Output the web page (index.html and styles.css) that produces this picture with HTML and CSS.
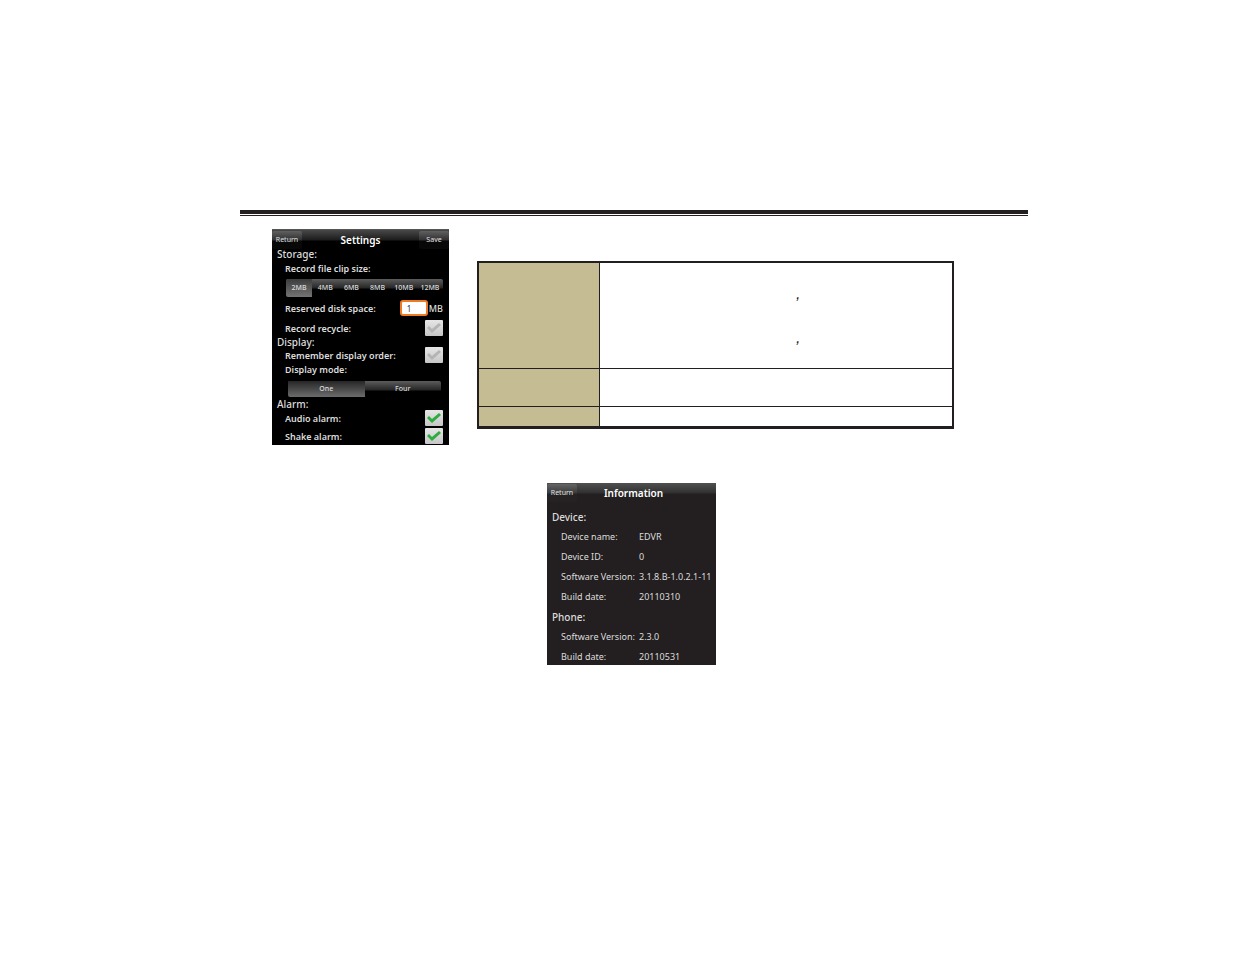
FILE: index.html
```
<!DOCTYPE html>
<html lang="en">
<head>
    <meta charset="UTF-8">
    <title>Settings and Information</title>
    <link rel="stylesheet" href="styles.css">
</head>
<body>

<main class="page">
    <hr class="page-rule">

    <div class="settings-row">
        <form class="phone settings">
            <header class="phone-bar">
                <button type="button" class="bar-btn">Return</button>
                <h1>Settings</h1>
                <button type="button" class="bar-btn">Save</button>
            </header>

            <h2>Storage:</h2>
            <div class="line" id="clipLabel">Record file clip size:</div>
            <div class="segments" role="radiogroup" aria-labelledby="clipLabel">
                <label><input type="radio" name="clip" checked>2MB</label>
                <label><input type="radio" name="clip">4MB</label>
                <label><input type="radio" name="clip">6MB</label>
                <label><input type="radio" name="clip">8MB</label>
                <label><input type="radio" name="clip">10MB</label>
                <label><input type="radio" name="clip">12MB</label>
            </div>
            <div class="line tall">
                <label for="space">Reserved disk space:</label>
                <span class="amount"><input type="text" id="space" value="1">MB</span>
            </div>
            <div class="line tall">
                <label for="recycle">Record recycle:</label>
                <input type="checkbox" id="recycle">
            </div>

            <h2>Display:</h2>
            <div class="line compact">
                <label for="order">Remember display order:</label>
                <input type="checkbox" id="order">
            </div>
            <div class="line short" id="modeLabel">Display mode:</div>
            <div class="segments mode" role="radiogroup" aria-labelledby="modeLabel">
                <label><input type="radio" name="mode" checked>One</label>
                <label><input type="radio" name="mode">Four</label>
            </div>

            <h2>Alarm:</h2>
            <div class="line">
                <label for="audio">Audio alarm:</label>
                <input type="checkbox" id="audio" checked>
            </div>
            <div class="line">
                <label for="shake">Shake alarm:</label>
                <input type="checkbox" id="shake" checked>
            </div>
        </form>

        <table class="notes">
            <tbody>
                <tr class="row-large">
                    <th scope="row"></th>
                    <td><p>,</p><p>,</p></td>
                </tr>
                <tr class="row-medium">
                    <th scope="row"></th>
                    <td></td>
                </tr>
                <tr class="row-small">
                    <th scope="row"></th>
                    <td></td>
                </tr>
            </tbody>
        </table>
    </div>

    <section class="phone info">
        <header class="phone-bar">
            <button type="button" class="bar-btn">Return</button>
            <h1>Information</h1>
        </header>
        <div class="info-body">
            <h2>Device:</h2>
            <dl>
                <dt>Device name:</dt><dd>EDVR</dd>
                <dt>Device ID:</dt><dd>0</dd>
                <dt>Software Version:</dt><dd>3.1.8.B-1.0.2.1-11</dd>
                <dt>Build date:</dt><dd>20110310</dd>
            </dl>
            <h2>Phone:</h2>
            <dl>
                <dt>Software Version:</dt><dd>2.3.0</dd>
                <dt>Build date:</dt><dd>20110531</dd>
            </dl>
        </div>
    </section>
</main>

</body>
</html>
```
FILE: styles.css
```
* {
    box-sizing: border-box;
}

body {
    margin: 0;
    background: #fff;
    color: #231f20;
    font-family: "Noto Sans", "Open Sans", sans-serif;
}

.page {
    padding: 210px 207px 40px 240px;
}

.page-rule {
    height: 6px;
    margin: 0;
    border: 0;
    border-top: 4px solid #231f20;
    border-bottom: 1px solid #231f20;
}

.settings-row {
    display: flex;
    align-items: flex-start;
    gap: 28px;
    padding: 13px 74px 0 32px;
}

/* phone screens */
.phone {
    overflow: hidden;
    background: #000;
    color: #dcdcdc;
    font-size: 9px;
}

.settings {
    flex: 0 0 177px;
}

.phone-bar {
    display: grid;
    grid-template-columns: 30px 1fr 30px;
    align-items: start;
    height: 21px;
    border-top: 1px solid #555;
    background: linear-gradient(#484848, #1c1c1c 10px, #000 11px);
}

.phone h1 {
    margin: 0;
    color: #fff;
    font-size: 10px;
    font-weight: 600;
    line-height: 20px;
    text-align: center;
}

.phone h2 {
    margin: 0;
    padding-left: 5px;
    font-size: 10px;
    font-weight: 500;
    line-height: 9px;
}

.bar-btn {
    height: 18px;
    margin: 1px 0 0;
    padding: 0;
    border: 0;
    border-radius: 2px;
    background: linear-gradient(#606060, #303030 9px, #080808 10px);
    color: #e0e0e0;
    font-family: inherit;
    font-size: 7px;
    line-height: 18px;
}

.line {
    display: flex;
    align-items: center;
    justify-content: space-between;
    height: 18px;
    padding: 0 6px 0 13px;
    font-weight: 600;
}

.tall {
    height: 20px;
}

.compact {
    height: 16px;
}

.short {
    height: 12px;
}

.segments {
    display: flex;
    height: 18px;
    margin: 2px 6px 1px 14px;
    border-radius: 2px;
    overflow: hidden;
    background: linear-gradient(#5c5c5c, #262626 9px, #000 10px);
    font-size: 7px;
    font-weight: 500;
}

.segments label {
    flex: 1;
    line-height: 18px;
    text-align: center;
}

.segments label:has(:checked) {
    background: linear-gradient(#3c3c3c, #747474);
}

.segments input {
    position: absolute;
    opacity: 0;
    margin: 0;
    width: 1px;
    height: 1px;
}

.mode {
    height: 16px;
    margin: 6px 8px 3px 16px;
}

.mode label {
    line-height: 16px;
}

.mode label:has(:checked) {
    background: linear-gradient(#262626, #6c6c6c);
}

.amount {
    display: flex;
    align-items: center;
    gap: 1px;
    font-weight: 500;
}

.amount input {
    width: 28px;
    height: 16px;
    padding: 0 8px 0 5px;
    border: 2px solid #ee7a24;
    border-radius: 3px;
    background: #fff;
    color: #333;
    font-family: inherit;
    font-size: 8px;
}

.line input[type="checkbox"] {
    appearance: none;
    width: 18px;
    height: 16px;
    margin: 0;
    border-radius: 1px;
    background: linear-gradient(#e6e6e6, #c6c6c6);
}

.line input[type="checkbox"]::before {
    content: "";
    display: block;
    width: 18px;
    height: 16px;
    background: #b4b4b4;
    clip-path: polygon(2px 8px, 4px 6px, 7px 9px, 14px 3px, 16px 5px, 7px 13px);
}

.line input[type="checkbox"]:checked::before {
    background: #2fac3f;
}

/* description table */
.notes {
    flex: 1;
    margin-top: 32px;
    border-collapse: separate;
    border-spacing: 0;
    table-layout: fixed;
    border: 2px solid #231f20;
    border-bottom-width: 3px;
}

.notes th {
    width: 121px;
    padding: 0;
    border-right: 1px solid #231f20;
    background: #c5bc94;
}

.notes td {
    padding: 0 0 0 196px;
    font-family: "Liberation Sans", Arial, sans-serif;
    font-size: 16px;
    font-style: italic;
}

.notes p {
    margin: 0;
    line-height: 44px;
}

.notes tr + tr > * {
    border-top: 1px solid #231f20;
}

.row-large {
    height: 105px;
}

.row-medium {
    height: 38px;
}

.row-small {
    height: 20px;
}

/* information screen */
.info {
    width: 169px;
    margin: 38px 0 0 307px;
    background: #231f20;
}

.info .phone-bar {
    grid-template-columns: 30px 1fr 26px;
    border-top: 0;
    background: linear-gradient(#505050, #303030 10px, #231f20 11px);
}

.info .bar-btn {
    background: linear-gradient(#646464, #3a3a3a 9px, #262223 10px);
}

.info-body {
    display: grid;
    gap: 4px;
    padding-top: 5px;
}

.info h2 {
    line-height: 16px;
}

.info dl {
    display: grid;
    grid-template-columns: 78px 1fr;
    row-gap: 4px;
    margin: 0;
    padding-left: 14px;
    line-height: 16px;
    white-space: nowrap;
}

.info dd {
    margin: 0;
}
```
